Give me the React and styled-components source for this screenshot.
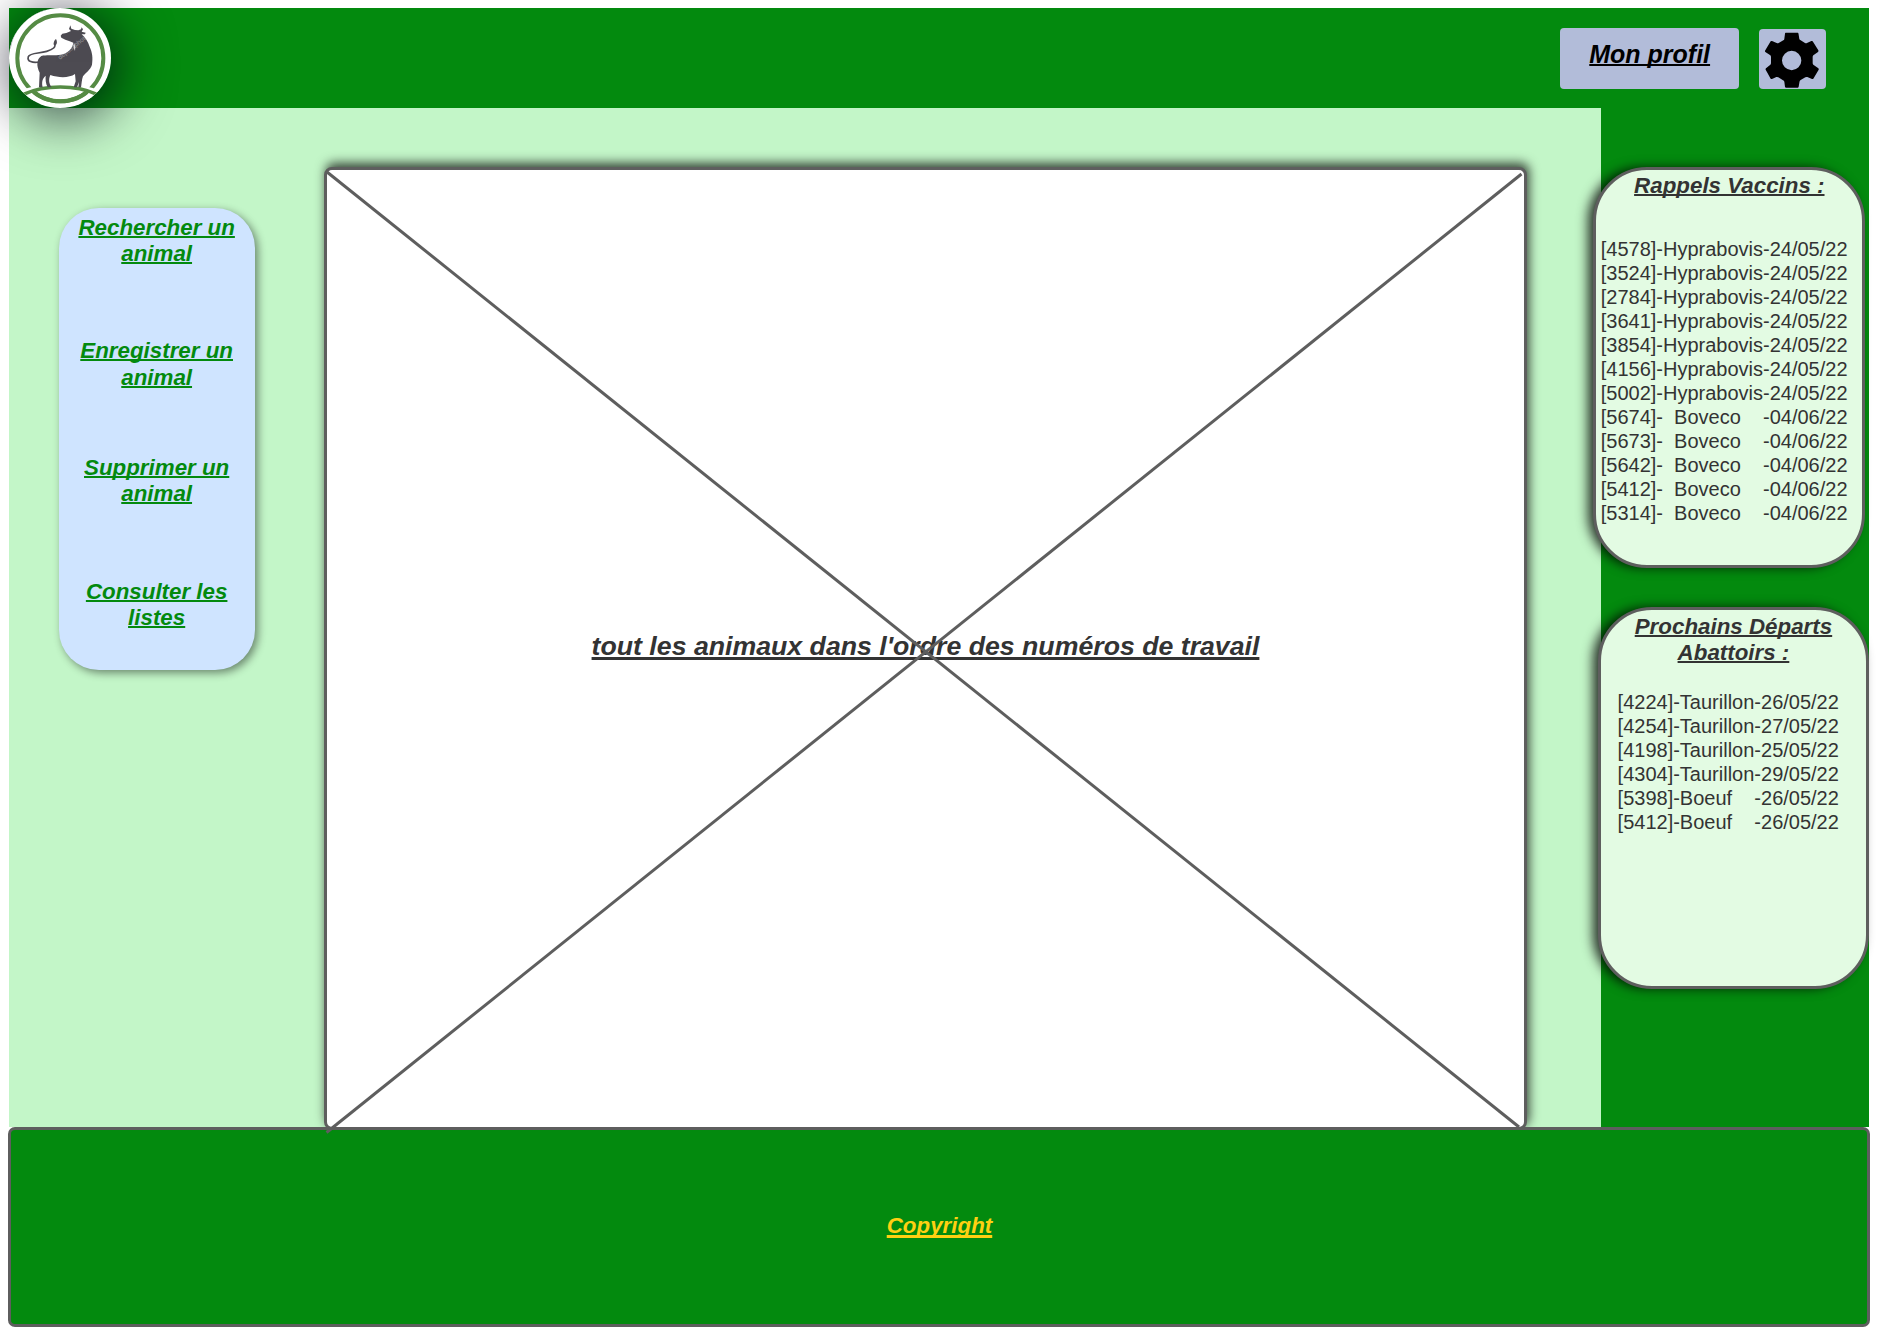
import React from "react";
import styled, { createGlobalStyle } from "styled-components";

const GREEN = "#038a0e";
const GREY = "#5e5e5e";
const INK = "#333333";

const GlobalStyle = createGlobalStyle`
  * { box-sizing: border-box; }
  body {
    margin: 0;
    background: #ffffff;
    font-family: "Liberation Sans", Arial, sans-serif;
    color: ${INK};
  }
`;

const Page = styled.div`
  width: 1883px;
  height: 1339px;
  padding: 8px 0 0 9px;
  overflow: hidden;
`;

const Header = styled.header`
  display: flex;
  align-items: flex-start;
  width: 1860px;
  height: 100px;
  background: ${GREEN};
`;

const LogoBadge = styled.div`
  position: relative;
  z-index: 1;
  width: 102px;
  height: 100px;
  border-radius: 50%;
  background: #ffffff;
  box-shadow: 4px 7px 54px 4px rgba(0, 0, 20, 0.7);

  svg {
    display: block;
    width: 102px;
    height: 100px;
    border-radius: 50%;
  }
`;

const HeaderActions = styled.div`
  display: flex;
  gap: 20px;
  margin-left: auto;
  padding: 20px 43.3px 0 0;
`;

const HeaderButton = styled.button`
  display: flex;
  justify-content: center;
  align-items: flex-start;
  width: ${(p) => p.$width}px;
  height: ${(p) => p.$height}px;
  margin: ${(p) => p.$top || 0}px 0 0;
  padding: ${(p) => p.$pad}px 0 0;
  border: 0;
  border-radius: 4px;
  background: #b2bcd9;
`;

const Label = styled.span`
  display: block;
  font-size: ${(p) => p.$size || 22.35}px;
  line-height: ${(p) => p.$line || 26.67}px;
  font-weight: bold;
  font-style: italic;
  text-align: center;
  text-decoration: underline;
  text-decoration-skip-ink: none;
  text-decoration-thickness: ${(p) => p.$stroke || 2}px;
  color: ${(p) => p.$color || INK};
  font-family: "Liberation Sans", Arial, sans-serif;
`;

const Body = styled.div`
  display: flex;
  width: 1860px;
  height: 1018.5px;
`;

const Content = styled.main`
  display: flex;
  align-items: flex-start;
  width: 1592px;
  background: #c3f6c8;
`;

const Nav = styled.nav`
  width: 195.7px;
  height: 462.3px;
  margin: 99.7px 0 0 50px;
  padding: 7px 13.4px 0 13px;
  border-radius: 40px;
  background: #cfe4ff;
  box-shadow: 3px 3px 9px rgba(0, 0, 0, 0.45);
`;

const NavItem = styled.a`
  display: block;
  height: ${(p) => p.$height}px;
`;

const Board = styled.section`
  position: relative;
  display: flex;
  justify-content: center;
  width: 1203px;
  height: 963px;
  margin: 59px 0 0 69.3px;
  padding-top: 460px;
  border: 3px solid ${GREY};
  border-radius: 8px;
  background: #ffffff;
  box-shadow: 2px -4px 11px 0 rgba(0, 0, 0, 0.72);
`;

const Cross = styled.svg`
  position: absolute;
  z-index: 2;
  left: -3px;
  top: -3px;
  width: 1203px;
  height: 968px;
  overflow: visible;
`;

const Aside = styled.aside`
  display: flex;
  flex-direction: column;
  align-items: flex-start;
  width: 268px;
  background: ${GREEN};
`;

const Card = styled.section`
  flex: none;
  position: relative;
  width: ${(p) => p.$width}px;
  height: ${(p) => p.$height}px;
  margin: ${(p) => p.$top}px 0 0 ${(p) => p.$left}px;
  padding-top: 3.7px;
  border: 3px solid ${GREY};
  border-radius: 54px;
  background: #e3fbe3;
  box-shadow: -6px 0 12px -1px rgba(0, 0, 0, 0.8);
`;

const Entries = styled.ul`
  margin: ${(p) => p.$top}px 0 0 ${(p) => p.$left}px;
  padding: 0;
  list-style: none;
  font-size: 20px;
  line-height: 24px;
  white-space: pre;
`;

const Footer = styled.footer`
  position: relative;
  display: flex;
  justify-content: center;
  width: 1862px;
  height: 200.5px;
  margin-left: -1px;
  padding: 83.5px 0 0 1px;
  border: 3px solid ${GREY};
  border-radius: 7px;
  background: ${GREEN};
`;

const vaccines = [
  "[4578]-Hyprabovis-24/05/22",
  "[3524]-Hyprabovis-24/05/22",
  "[2784]-Hyprabovis-24/05/22",
  "[3641]-Hyprabovis-24/05/22",
  "[3854]-Hyprabovis-24/05/22",
  "[4156]-Hyprabovis-24/05/22",
  "[5002]-Hyprabovis-24/05/22",
  "[5674]-  Boveco    -04/06/22",
  "[5673]-  Boveco    -04/06/22",
  "[5642]-  Boveco    -04/06/22",
  "[5412]-  Boveco    -04/06/22",
  "[5314]-  Boveco    -04/06/22",
];

const departures = [
  "[4224]-Taurillon-26/05/22",
  "[4254]-Taurillon-27/05/22",
  "[4198]-Taurillon-25/05/22",
  "[4304]-Taurillon-29/05/22",
  "[5398]-Boeuf    -26/05/22",
  "[5412]-Boeuf    -26/05/22",
];

const links = [
  { lines: ["Rechercher un", "animal"], height: 123.7 },
  { lines: ["Enregistrer un", "animal"], height: 116.3 },
  { lines: ["Supprimer un", "animal"], height: 124 },
  { lines: ["Consulter les", "listes"], height: 60 },
];

function BullLogo() {
  return (
    <svg viewBox="27 24 306 300">
      <path d="M29 146 Q46 50 146 25" fill="none" stroke="#b9b9be" strokeWidth="6" />
      <circle cx="181" cy="175" r="129" fill="none" stroke="#558b44" strokeWidth="12" />
      <path d="M50 284 Q120 256 181 256 Q242 256 311 284" fill="none" stroke="#fff" strokeWidth="16" />
      <path d="M24 260 L72 282 L96 276 L110 330 L24 330 Z" fill="#fff" />
      <path d="M336 260 L290 282 L266 276 L252 330 L336 330 Z" fill="#fff" />
      <path d="M70 283 Q120 261 181 261 Q242 261 291 283" fill="none" stroke="#558b44" strokeWidth="11" />
      <path d="M98 273 Q134 304 181 304 Q228 304 264 273" fill="none" stroke="#558b44" strokeWidth="12" />
      <path
        d="M118 186 C98 190 80 184 85 170 C90 158 116 161 140 154 C160 148 168 142 164 128"
        fill="none"
        stroke="#4d4b52"
        strokeWidth="5"
      />
      <path d="M161 134 Q160 123 168 117 Q174 128 167 136Z" fill="#4d4b52" />
      <path
        d="M182 107 L187 101 L199 99 L213 93 L207 87 L211 76 L214 86 L225 90 L235 91 L243 88 L245 82 L249 88 L245 95 L257 98 L255 103 L245 103 C256 112 264 126 269 140 C277 158 279 172 276 194 C271 211 255 219 249 229 C245 240 245 252 243 262 L235 262 L237 246 L231 262 L221 262 L227 244 L225 222 C208 234 177 234 151 225 C145 238 147 252 155 262 L143 262 C137 250 136 238 137 227 C126 236 125 249 128 262 L117 262 L119 218 C109 199 109 178 124 168 C144 163 169 169 188 163 C208 156 218 143 220 128 L209 124 L196 119 L184 113 Z"
        fill="#4d4b52"
      />
      <path d="M222 128 Q228 139 225 153 Q218 140 222 128Z" fill="#f4f4f4" opacity=".8" />
      <text
        x="180"
        y="179"
        fontFamily="Liberation Sans, sans-serif"
        fontSize="19"
        fill="#ffffff"
        opacity=".38"
        transform="rotate(-38 180 179)"
      >
        depositphotos
      </text>
    </svg>
  );
}

function Gear() {
  return (
    <svg width="55" height="56" viewBox="29 22 165 168">
      <path
        fillRule="evenodd"
        d="M91 24 H127 Q129 24 129.500 27 L132 43 Q133 45 136 47 L149 55 Q152 57 155 55 L168 49 Q170 48 172 50 L189 77 Q190 80 188 82 L174 92 Q172 94 172 97 V115 Q172 118 174 120 L189 131 Q191 133 190 135 L174 162 Q172 164 170 163 L156 157 Q153 156 150 158 L136 166 Q133 168 132.500 171 L130 186 Q129 189 127 189 H92 Q90 189 89 186 L87 171 Q86 168 83 167 L69 158 Q66 156 63 157 L50 163 Q48 164 46 162 L31 135 Q30 133 32 131 L45 120 Q47 118 47 115 V97 Q47 94 45 92 L30 82 Q28 80 29 78 L46 50 Q48 48 50 49 L64 55 Q67 57 70 55 L84 47 Q87 45 87 42 L89 27 Q89 24 91 24 Z M109 78.500 A29 29 0 1 0 109 136.500 A29 29 0 1 0 109 78.500 Z"
        fill="#000"
      />
    </svg>
  );
}

export default function App() {
  return (
    <Page>
      <GlobalStyle />
      <Header>
        <LogoBadge>
          <BullLogo />
        </LogoBadge>
        <HeaderActions>
          <HeaderButton $width={178.7} $height={61} $pad={10.5}>
            <Label $size={25} $line={30} $color="#000">Mon profil</Label>
          </HeaderButton>
          <HeaderButton $width={66.7} $height={60} $top={1} $pad={3}>
            <Gear />
          </HeaderButton>
        </HeaderActions>
      </Header>
      <Body>
        <Content>
          <Nav>
            {links.map((link) => (
              <NavItem key={link.lines[0]} $height={link.height}>
                {link.lines.map((line) => (
                  <Label key={line} $color={GREEN}>{line}</Label>
                ))}
              </NavItem>
            ))}
          </Nav>
          <Board>
            <Label $size={26.7} $line={32} $stroke={3}>
              tout les animaux dans l'ordre des numéros de travail
            </Label>
            <Cross viewBox="0 0 1203 968">
              <g stroke={GREY} strokeWidth="3">
                <line x1="3" y1="5" x2="1195" y2="960" />
                <line x1="1197.500" y1="7" x2="2.500" y2="965.500" />
              </g>
            </Cross>
          </Board>
        </Content>
        <Aside>
          <Card $width={272} $height={401.7} $top={58.7} $left={-7.7}>
            <Label>Rappels Vaccins :</Label>
            <Entries $top={37.4} $left={4.4}>
              {vaccines.map((entry) => (
                <li key={entry}>{entry}</li>
              ))}
            </Entries>
          </Card>
          <Card $width={270.5} $height={382.5} $top={38.6} $left={-2.8}>
            <Label>Prochains Départs</Label>
            <Label>Abattoirs :</Label>
            <Entries $top={22.8} $left={16.4}>
              {departures.map((entry) => (
                <li key={entry}>{entry}</li>
              ))}
            </Entries>
          </Card>
        </Aside>
      </Body>
      <Footer>
        <Label $color="#ffd012" $stroke={3}>Copyright</Label>
      </Footer>
    </Page>
  );
}
